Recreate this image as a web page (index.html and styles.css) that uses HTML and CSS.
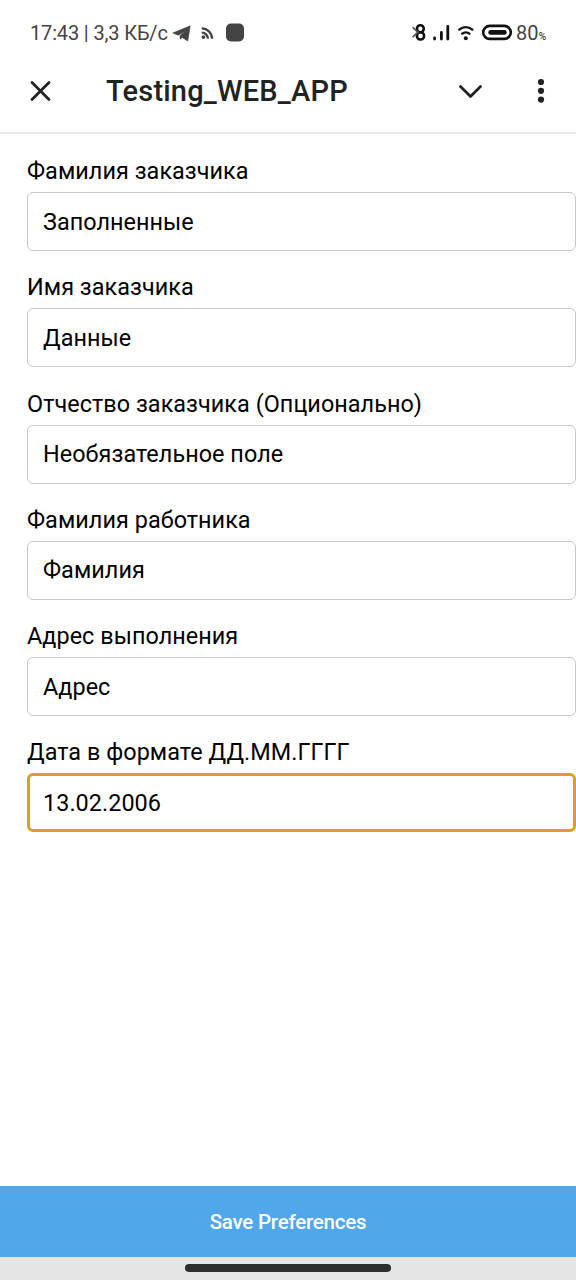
FILE: index.html
```html
<!DOCTYPE html>
<html lang="ru">
<head>
<meta charset="utf-8">
<title>Testing_WEB_APP</title>
<link rel="stylesheet" href="styles.css">
</head>
<body>
<div class="screen">
  <div class="status">
    <span class="status-text">17:43 | 3,3 КБ/с</span>
    <svg class="notices" width="76" height="24" viewBox="0 0 76 24">
      <path d="M.8 12 18.2 4.8 15.8 20 10.2 16.6 8.2 18.2 8 14.6 13.6 9.8 6.2 14.2Z" fill="#444" stroke="#444" stroke-width=".6" stroke-linejoin="round"/>
      <g fill="none" stroke="#444" stroke-width="2.3"><path d="M29.7 7.4A10.4 10.4 0 0 1 40.1 17.8"/><path d="M29.7 11.6A6.2 6.2 0 0 1 35.9 17.8"/></g>
      <circle cx="31.4" cy="16.1" r="1.9" fill="#444"/>
      <rect x="54" y="2.5" width="18" height="18" rx="5" fill="#444"/>
    </svg>
    <svg class="system" width="102" height="24" viewBox="0 .6 102 24">
      <g fill="none" stroke="#111" stroke-width="2.6" stroke-linecap="round">
        <rect x="5" y="4.9" width="6.7" height="7" rx="3.2"/><rect x="5" y="11.9" width="7" height="7.2" rx="3.3"/>
        <path d="M1.2 7.4 5.9 11.8 1.2 16.3" stroke-width="1.8" stroke="#555"/>
        <path d="M22.6 17.6v1M29.4 12v6.6M35.8 6v12.6" stroke-width="2.8"/>
        <path d="M47.3 9.2a9.9 9.9 0 0 1 13 0M50.2 13.3a5.5 5.5 0 0 1 7.2 0" stroke-width="2.4"/>
        <rect x="71.2" y="5.5" width="27.6" height="13" rx="6.5"/>
      </g>
      <circle cx="53.8" cy="17.8" r="2" fill="#111"/>
      <rect x="76.3" y="9.6" width="18.4" height="4.8" rx="2.2" fill="#111"/>
    </svg>
    <span class="battery">80<small>%</small></span>
  </div>
  <header class="bar">
    <svg class="close" width="24" height="24" viewBox="0 0 24 24"><path d="M4 3.5 21 20.5M21 3.5 4 20.5"/></svg>
    <h1 class="title">Testing_WEB_APP</h1>
    <svg class="chevron" width="24" height="24" viewBox="0 0 24 24"><path d="M2.5 7.5 12.5 17.5 22.5 7.5"/></svg>
    <svg class="more" width="8" height="26" viewBox="0 0 8 26"><circle cx="4" cy="4" r="3.1"/><circle cx="4" cy="12.8" r="3.1"/><circle cx="4" cy="21.6" r="3.1"/></svg>
  </header>
  <main class="form">
    <label class="field"><span class="label">Фамилия заказчика</span><input class="input" type="text" value="Заполненные"></label>
    <label class="field"><span class="label">Имя заказчика</span><input class="input" type="text" value="Данные"></label>
    <label class="field"><span class="label">Отчество заказчика (Опционально)</span><input class="input" type="text" value="Необязательное поле"></label>
    <label class="field"><span class="label">Фамилия работника</span><input class="input" type="text" value="Фамилия"></label>
    <label class="field"><span class="label">Адрес выполнения</span><input class="input" type="text" value="Адрес"></label>
    <label class="field"><span class="label">Дата в формате ДД.ММ.ГГГГ</span><input class="input input-active" type="text" value="13.02.2006"></label>
  </main>
  <button class="save" type="button">Save Preferences</button>
  <div class="nav"><div class="handle"></div></div>
</div>
</body>
</html>
```
FILE: styles.css
```css
* { box-sizing: border-box; }
body { margin: 0; background: #fff; font-family: Roboto, "Noto Sans", sans-serif; }
.screen { display: flex; flex-direction: column; width: 576px; height: 1280px; overflow: hidden; }
.status { display: flex; align-items: center; height: 50px; padding: 15px 0 0 30px; color: #444; font-size: 20px; }
.status-text { width: 142px; white-space: nowrap; letter-spacing: -.15px; }
.notices { flex: none; }
.system { flex: none; margin-left: 164px; }
.battery { margin-left: 2px; white-space: nowrap; }
.battery small { font-size: 10.5px; font-weight: 500; }
.bar { display: flex; align-items: center; height: 84px; padding-left: 28px; border-bottom: 2px solid #e8e8e8; }
.bar svg { flex: none; fill: none; stroke: #222; stroke-width: 2.8; stroke-linecap: round; stroke-linejoin: round; }
.title { width: 352px; margin: 0 0 0 54px; color: #222; font-size: 29px; line-height: 34px; font-weight: 500; letter-spacing: .2px; }
.bar .more { margin-left: 55px; fill: #222; stroke: none; }
.form { flex: 1; padding: 23.3px 0 0 27px; }
.field { display: block; height: 116.2px; }
.label { display: block; height: 28px; margin-bottom: 7px; color: #000; font-size: 23.4px; line-height: 28px; letter-spacing: .05px; white-space: nowrap; }
.input { display: block; width: 549px; height: 59px; padding: 0 15px; border: 1px solid #c8c8c8; border-radius: 6px; outline: 0; background: #fff; color: #000; font: 23.4px Roboto, "Noto Sans", sans-serif; letter-spacing: .05px; }
.input-active { padding: 0 13px; border: 3px solid #dc9f25; }
.save { height: 71px; padding: 0; border: 0; background: #50a7ea; color: #fff; font: 500 20.5px Roboto, sans-serif; letter-spacing: -.22px; }
.nav { height: 23px; padding-top: 7px; background: #e5e5e5; }
.handle { width: 206px; height: 8px; margin: 0 auto; border-radius: 4px; background: #2c2e2d; }
```
